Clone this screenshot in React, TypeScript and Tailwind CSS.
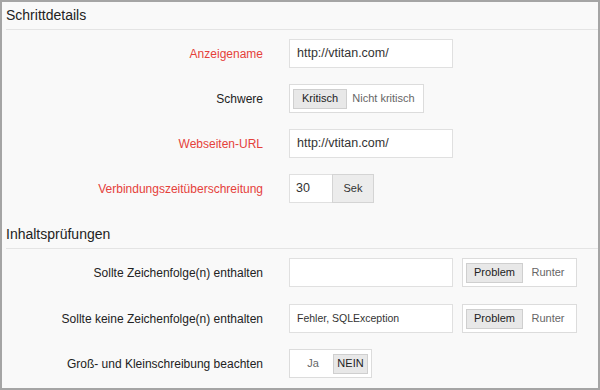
import React from "react";

function Header({ title }: { title: string }) {
  return (
    <div className="ml-1 flex h-[28px] items-center border-b border-[#e4e4e4] text-[14px] text-[#222]">
      {title}
    </div>
  );
}

function Row({
  label,
  red,
  children,
  className = "",
}: {
  label: string;
  red?: boolean;
  children: React.ReactNode;
  className?: string;
}) {
  return (
    <div className={`flex h-[29px] items-center ${className}`}>
      <div
        className={`w-[261px] text-right text-[12px] ${
          red ? "text-[#e5413b]" : "text-[#222]"
        }`}
      >
        {label}
      </div>
      <div className="ml-[26px] flex h-full items-center gap-[9px]">{children}</div>
    </div>
  );
}

function TextInput({ value, small }: { value: string; small?: boolean }) {
  return (
    <div
      className={`flex h-[29px] w-[164px] items-center border border-[#e0e0e0] bg-white px-[7px] text-[#333] ${
        small ? "text-[10.5px]" : "text-[12.5px]"
      }`}
    >
      {value}
    </div>
  );
}

function Segmented({
  options,
  active,
  widths,
}: {
  options: string[];
  active: number;
  widths: string[];
}) {
  return (
    <div className="flex h-[29px] items-center border border-[#dcdcdc] bg-white px-[3px]">
      {options.map((o, i) => (
        <div
          key={o}
          className={`flex h-[20px] items-center justify-center text-[11px] ${widths[i]} ${
            i === active
              ? "border border-[#cfcfcf] bg-[#e8e8e8] text-[#222]"
              : "text-[#666]"
          }`}
        >
          {o}
        </div>
      ))}
    </div>
  );
}

export default function App() {
  return (
    <div
      className="h-[390px] w-[600px] overflow-hidden border-2 border-[#a5a5a5] bg-[#f9f9f9]"
      style={{ fontFamily: '"Liberation Sans", Arial, sans-serif' }}
    >
      <Header title="Schrittdetails" />

      <Row label="Anzeigename" red className="mt-[9px]">
        <TextInput value="http://vtitan.com/" />
      </Row>

      <Row label="Schwere" className="mt-[16px]">
        <Segmented
          options={["Kritisch", "Nicht kritisch"]}
          active={0}
          widths={["w-[54px]", "w-[73px]"]}
        />
      </Row>

      <Row label="Webseiten-URL" red className="mt-[16px]">
        <TextInput value="http://vtitan.com/" />
      </Row>

      <Row label="Verbindungszeitüberschreitung" red className="mt-[16px]">
        <div className="flex h-[29px]">
          <div className="flex w-[43px] items-center border border-r-0 border-[#e0e0e0] bg-white px-[6px] text-[12.5px] text-[#333]">
            30
          </div>
          <div className="flex w-[42px] items-center justify-center border border-[#d4d4d4] bg-[#ececec] text-[11px] text-[#333]">
            Sek
          </div>
        </div>
      </Row>

      <div className="mt-[18px]">
        <Header title="Inhaltsprüfungen" />
      </div>

      <Row label="Sollte Zeichenfolge(n) enthalten" className="mt-[9px]">
        <TextInput value="" />
        <Segmented
          options={["Problem", "Runter"]}
          active={0}
          widths={["w-[57px]", "w-[50px]"]}
        />
      </Row>

      <Row label="Sollte keine Zeichenfolge(n) enthalten" className="mt-[17px]">
        <TextInput value="Fehler, SQLException" small />
        <Segmented
          options={["Problem", "Runter"]}
          active={0}
          widths={["w-[57px]", "w-[50px]"]}
        />
      </Row>

      <Row label="Groß- und Kleinschreibung beachten" className="mt-[16px]">
        <Segmented options={["Ja", "NEIN"]} active={1} widths={["w-[40px]", "w-[35px]"]} />
      </Row>
    </div>
  );
}
